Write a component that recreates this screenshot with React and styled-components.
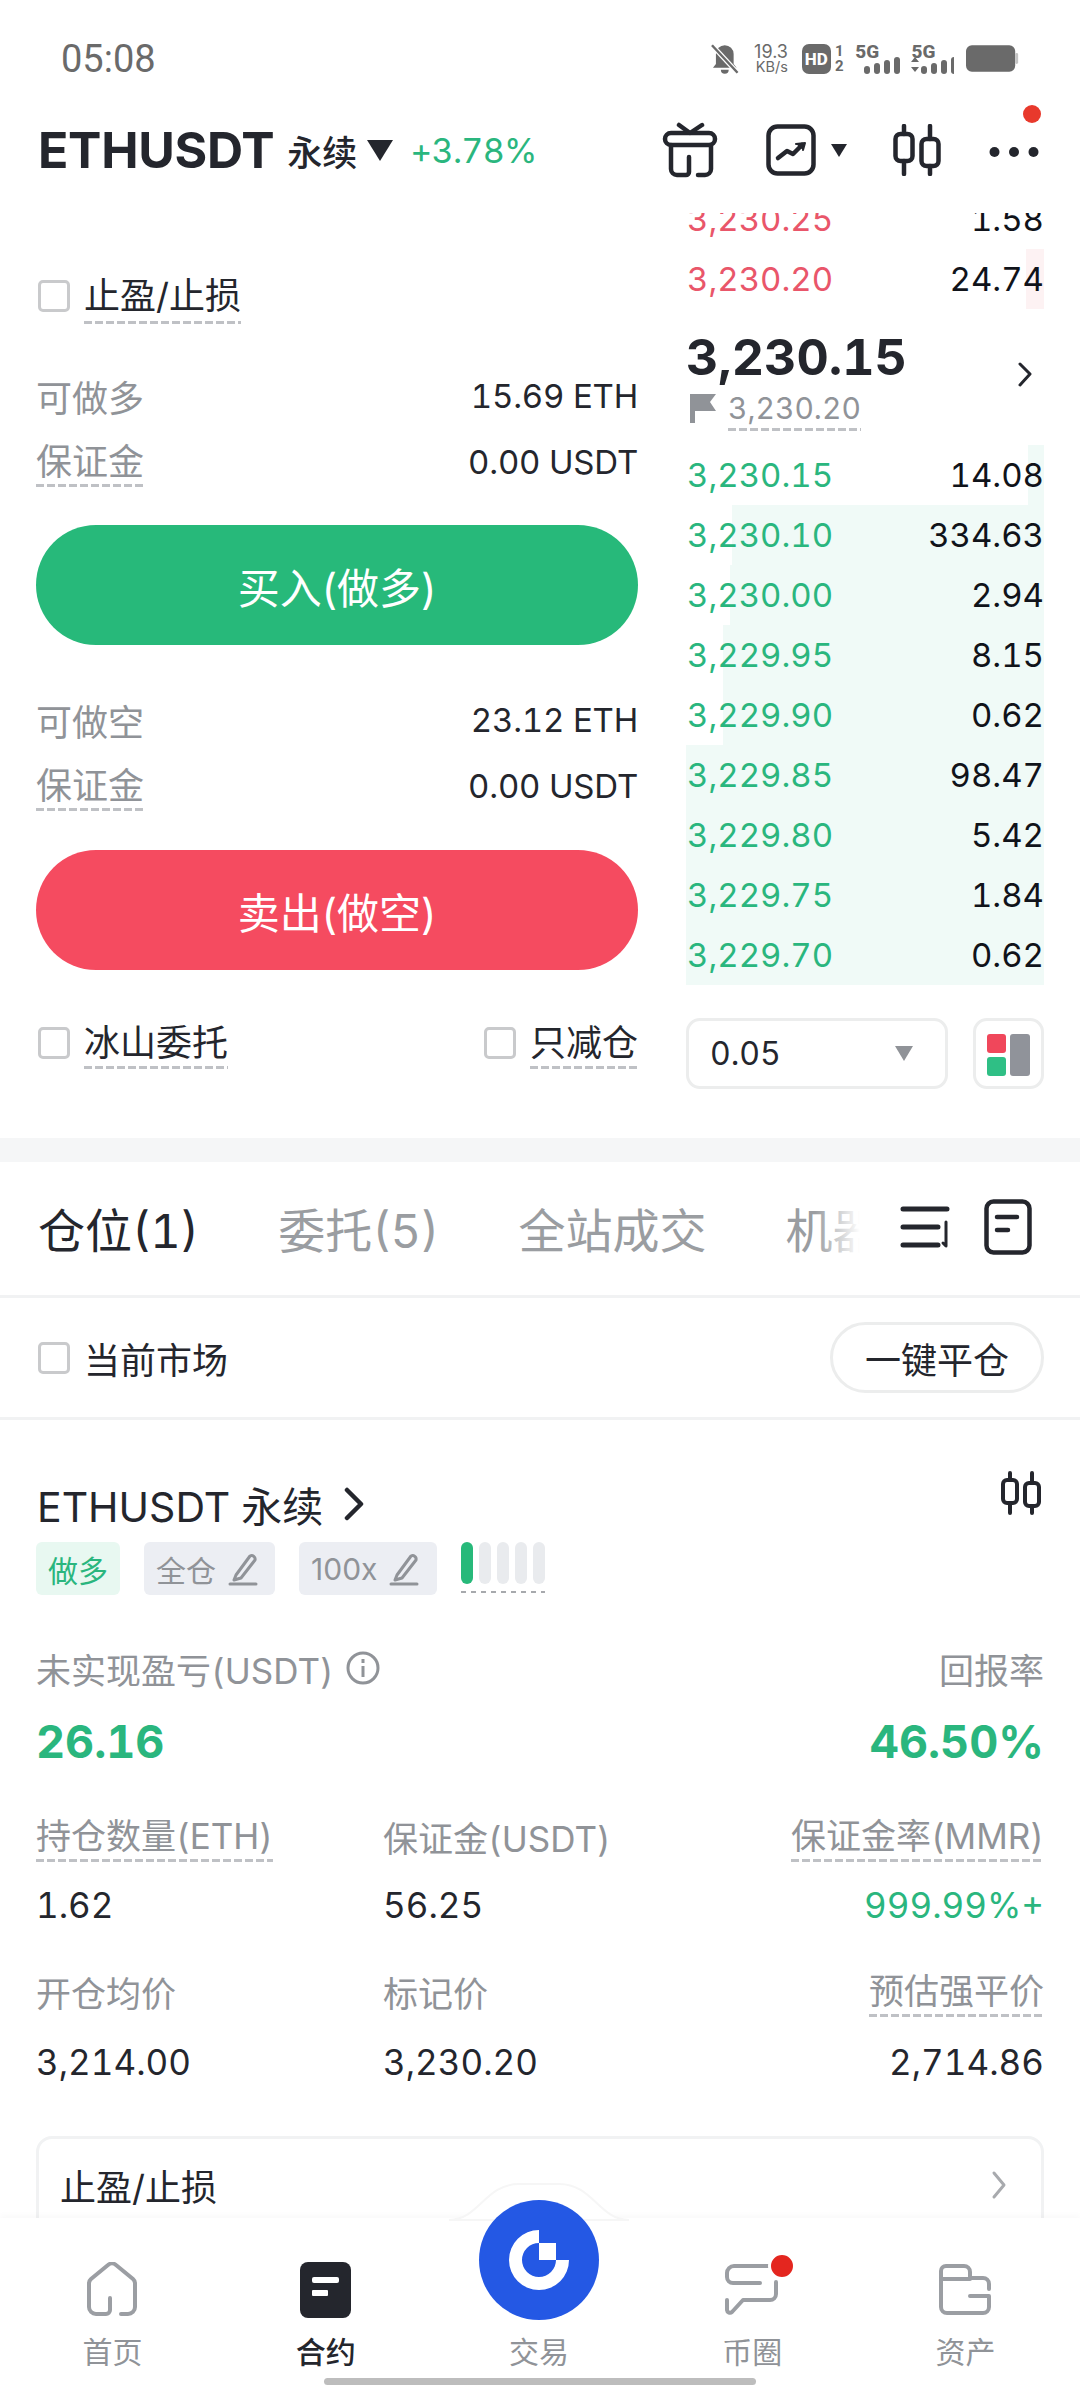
import React from 'react';
import styled, { createGlobalStyle } from 'styled-components';

const FONT = `Inter, "Noto Sans CJK SC", sans-serif`;
const DARK = '#24262d';
const GRAY = '#909398';
const GREEN = '#2ab67e';
const RED = '#e9566a';

const GlobalStyle = createGlobalStyle`
    html, body { margin: 0; padding: 0; background: #fff; }
    body { font-family: ${FONT}; color: ${DARK}; font-variant-numeric: tabular-nums; }
    * { box-sizing: border-box; }
`;

const Page = styled.div`
    position: relative;
    width: 1080px;
    height: 2388px;
    overflow: hidden;
    background: #fff;
`;

/* status bar */
const StatusBar = styled.div`
    height: 100px;
    padding: 44px 61px 0;
    display: flex;
    justify-content: space-between;
    align-items: flex-start;
    color: #6a6a6a;
`;
const Clock = styled.div`
    font: 400 38px/30px Roboto, sans-serif;
`;
const StatusIcons = styled.div`
    display: flex;
    width: 308px;
    align-items: flex-start;
`;
const Speed = styled.div`
    width: 36px;
    margin: 0 14px;
    text-align: right;
    font: 400 18px/16px Inter, sans-serif;
    small { display: block; font-size: 14.5px; line-height: 14px; }
`;
const HdBox = styled.div`
    width: 29px;
    height: 30px;
    border-radius: 7px;
    background: #6a6a6a;
    color: #fff;
    font: 800 17px/30px Roboto, sans-serif;
    text-align: center;
`;
const HdSlot = styled.div`
    width: 12px;
    margin: 0 10px 0 3px;
    font: 700 15px/15px Roboto, sans-serif;
    text-align: center;
`;
const Signal = styled.div`
    position: relative;
    width: ${(p) => p.$w}px;
    height: 30px;
    margin-right: 12px;
    font: 800 19px/16px Roboto, sans-serif;
    svg { position: absolute; right: 0; bottom: 0; }
`;

/* header */
const Header = styled.div`
    height: 113px;
    padding: 0 41px 13px 38px;
    display: flex;
    align-items: center;
`;
const Symbol = styled.div`
    font-size: 50px;
    font-weight: 700;
    letter-spacing: -0.3px;
`;
const Perp = styled.div`
    margin-left: 13px;
    font-size: 35px;
    font-weight: 500;
`;
const Caret = styled.div`
    width: 0;
    height: 0;
    margin-left: ${(p) => p.$ml || 0}px;
    border-left: ${(p) => p.$s}px solid transparent;
    border-right: ${(p) => p.$s}px solid transparent;
    border-top: ${(p) => p.$h}px solid ${(p) => p.$c || DARK};
`;
const Change = styled.div`
    margin-left: 17px;
    font-size: 34px;
    letter-spacing: -0.7px;
    color: ${GREEN};
`;
const HeaderIcons = styled.div`
    position: relative;
    margin-left: auto;
    display: flex;
    align-items: center;
    height: 56px;
`;
const RedDot = styled.span`
    position: absolute;
    right: -2px;
    top: -17px;
    width: 18px;
    height: 18px;
    border-radius: 50%;
    background: #e8392c;
`;

/* trade panel */
const Trade = styled.div`
    display: grid;
    grid-template-columns: 602px 358px;
    column-gap: 48px;
    padding: 0 36px 49px;
`;
const Form = styled.div`
    padding-top: 53px;
    display: flex;
    flex-direction: column;
`;
const CheckRow = styled.div`
    height: 60px;
    margin-top: ${(p) => p.$mt || 0}px;
    display: flex;
    align-items: center;
    justify-content: space-between;
`;
const Check = styled.label`
    display: flex;
    align-items: center;
    gap: 14px;
    padding-left: 2px;
    font-size: 36px;
`;
const Box = styled.span`
    width: 32px;
    height: 32px;
    border: 3px solid #c9cacc;
    border-radius: 5px;
`;
const Dashed = styled.span`
    position: relative;
    display: inline-block;
    line-height: 42px;
    &::after {
        content: '';
        position: absolute;
        left: 0;
        right: 0;
        bottom: ${(p) => p.$off ?? -5}px;
        height: 3px;
        background: repeating-linear-gradient(to right, #bfc1c5 0 8px, transparent 8px 11px);
    }
`;
const InfoRow = styled.div`
    height: 66px;
    margin-top: ${(p) => p.$mt || 0}px;
    display: flex;
    align-items: center;
    justify-content: space-between;
    font-size: 36px;
    color: ${GRAY};
`;
const InfoValue = styled.span`
    color: ${DARK};
    font-size: 33px;
    letter-spacing: -0.2px;
`;
const TradeButton = styled.button`
    width: 100%;
    height: 120px;
    margin-top: ${(p) => p.$mt}px;
    border: 0;
    border-radius: 60px;
    background: ${(p) => p.$bg};
    color: #fff;
    font: 400 42px ${FONT};
`;

/* order book */
const Book = styled.div`
    height: 876px;
    overflow: hidden;
    display: flex;
    flex-direction: column;
`;
const BookInner = styled.div`
    margin-top: -24px;
`;
const BookRow = styled.div`
    height: 60px;
    padding-left: 1px;
    display: flex;
    align-items: center;
    justify-content: space-between;
    font-size: 33px;
    background: linear-gradient(to left, ${(p) => p.$tint} ${(p) => p.$depth}px, transparent ${(p) => p.$depth}px);
`;
const Price = styled.span`
    color: ${(p) => p.$c};
`;
const Qty = styled.span`
    color: #10131a;
`;
const Mid = styled.div`
    position: relative;
    height: 136px;
`;
const MidPrice = styled.div`
    padding-top: 22px;
    font-size: 50px;
    font-weight: 700;
    line-height: 52px;
`;
const MarkRow = styled.div`
    margin-top: 4px;
    padding-left: 4px;
    display: flex;
    align-items: center;
    gap: 12px;
    font-size: 30px;
    color: ${GRAY};
`;
const MidArrow = styled.div`
    position: absolute;
    right: 11px;
    top: 52px;
`;
const BookControls = styled.div`
    margin-top: 33px;
    display: flex;
    justify-content: space-between;
`;
const DepthSelect = styled.div`
    width: 262px;
    height: 71px;
    padding: 0 32px 0 21px;
    border: 3px solid #eceded;
    border-radius: 14px;
    display: flex;
    align-items: center;
    justify-content: space-between;
    font-size: 32px;
`;
const LayoutButton = styled.div`
    width: 71px;
    height: 71px;
    border: 3px solid #eceded;
    border-radius: 14px;
    padding: 13px 11px;
`;

const Band = styled.div`
    height: 24px;
    background: #f5f6f7;
`;

/* tabs */
const Tabs = styled.div`
    height: 136px;
    padding: 0 48px 3px 38px;
    border-bottom: 3px solid #f1f2f3;
    display: flex;
    align-items: center;
`;
const TabScroll = styled.div`
    position: relative;
    width: 827px;
    display: flex;
    gap: 79px;
    overflow: hidden;
    white-space: nowrap;
    &::after {
        content: '';
        position: absolute;
        right: 0;
        top: 0;
        bottom: 0;
        width: 50px;
        background: linear-gradient(to right, rgba(255, 255, 255, 0), #fff 90%);
    }
`;
const Tab = styled.div`
    font-size: 47px;
    color: ${(p) => (p.$on ? DARK : '#9a9da1')};
`;
const TabIcons = styled.div`
    margin-left: auto;
    display: flex;
    align-items: center;
    gap: 34px;
`;

const Filter = styled.div`
    height: 122px;
    padding: 0 36px;
    border-bottom: 3px solid #f1f2f3;
    display: flex;
    align-items: center;
    justify-content: space-between;
`;
const CloseAll = styled.button`
    width: 214px;
    height: 71px;
    border: 3px solid #eceded;
    border-radius: 36px;
    background: #fff;
    color: ${DARK};
    font: 400 36px ${FONT};
`;

/* position */
const Position = styled.div`
    padding: 54px 36px 0;
`;
const TitleRow = styled.div`
    height: 60px;
    padding-left: 1px;
    display: flex;
    align-items: center;
    gap: 20px;
    font-size: 41px;
`;
const TitleSide = styled.div`
    margin-left: auto;
    margin-top: -12px;
    margin-right: 3px;
`;
const Tags = styled.div`
    margin-top: 8px;
    display: flex;
    gap: 24px;
    align-items: flex-start;
`;
const Tag = styled.div`
    height: 53px;
    padding: 0 ${(p) => p.$pr ?? 12}px 0 12px;
    border-radius: 6px;
    display: flex;
    align-items: center;
    gap: 12px;
    font-size: 30px;
    font-variant-numeric: normal;
    color: ${(p) => (p.$long ? GREEN : GRAY)};
    background: ${(p) => (p.$long ? '#e8f8f1' : '#eceef3')};
`;
const Risk = styled.div`
    position: relative;
    display: flex;
    gap: 6px;
    &::after {
        content: '';
        position: absolute;
        left: 0;
        right: 0;
        bottom: -9px;
        height: 2px;
        background: repeating-linear-gradient(to right, #a7a9ad 0 5px, transparent 5px 10px);
    }
`;
const RiskBar = styled.span`
    width: 12px;
    height: 42px;
    border-radius: 6px;
    background: ${(p) => (p.$on ? '#27b97a' : '#e9ebee')};
`;
const Summary = styled.div`
    height: 50px;
    margin-top: 48px;
    display: flex;
    align-items: center;
    justify-content: space-between;
    font-size: 35px;
    color: ${GRAY};
`;
const SummaryLabel = styled.div`
    display: flex;
    align-items: center;
    gap: 12px;
`;
const Pnl = styled.div`
    height: 60px;
    margin-top: 18px;
    display: flex;
    align-items: center;
    justify-content: space-between;
    font-size: 45px;
    font-weight: 700;
    color: ${GREEN};
`;
const Stats = styled.div`
    margin-top: 39px;
    display: grid;
    grid-template-columns: 347px 1fr 1fr;
    grid-template-rows: 52px 86px 86px 56px;
`;
const Stat = styled.div`
    display: flex;
    align-items: center;
    justify-content: ${(p) => (p.$right ? 'flex-end' : 'flex-start')};
    font-size: 35px;
    color: ${(p) => p.$c || (p.$value ? DARK : GRAY)};
`;
const StopCard = styled.div`
    height: 170px;
    margin-top: 46px;
    padding: 0 33px 72px 21px;
    border: 3px solid #f1f2f3;
    border-radius: 16px;
    display: flex;
    align-items: center;
    justify-content: space-between;
    font-size: 36px;
`;

/* bottom nav */
const Nav = styled.div`
    position: absolute;
    left: 0;
    right: 0;
    bottom: 0;
    height: 170px;
    padding: 44px 8px 0 6px;
    background: #fff;
    box-shadow: 0 -3px 6px rgba(0, 0, 0, 0.025);
    display: grid;
    grid-template-columns: repeat(5, 1fr);
    justify-items: center;
`;
const Bump = styled.svg`
    position: absolute;
    left: 449px;
    top: -36px;
`;
const NavItem = styled.div`
    position: relative;
    display: flex;
    flex-direction: column;
    align-items: center;
    font-size: 30px;
    font-weight: ${(p) => (p.$on ? 500 : 400)};
    color: ${(p) => (p.$on ? DARK : GRAY)};
`;
const NavIcon = styled.div`
    height: 58px;
    margin-bottom: 8px;
    display: flex;
    align-items: flex-start;
`;
const NavBall = styled.div`
    position: absolute;
    left: 50%;
    top: -62px;
    margin-left: -60px;
    width: 120px;
    height: 120px;
    border-radius: 50%;
    background: #2458e4;
    display: flex;
    align-items: center;
    justify-content: center;
`;
const Indicator = styled.div`
    position: absolute;
    left: 324px;
    bottom: 3px;
    width: 432px;
    height: 7px;
    border-radius: 4px;
    background: #bdbdbd;
`;
const RedBadge = styled.span`
    position: absolute;
    left: 46px;
    top: -10px;
    width: 28px;
    height: 28px;
    border: 3px solid #fff;
    border-radius: 50%;
    background: #e4261f;
`;

const Stroke = ({ w, h, sw = 4.5, color = DARK, ml = 0, children }) => (
    <svg
        width={w}
        height={h}
        viewBox={`0 0 ${w} ${h}`}
        fill="none"
        stroke={color}
        strokeWidth={sw}
        strokeLinecap="round"
        strokeLinejoin="round"
        style={ml ? { marginLeft: ml } : undefined}
    >
        {children}
    </svg>
);

const Pencil = () => (
    <Stroke w={30} h={34} sw={3} color={GRAY}>
        <path d="M8 23 L22 4 a3.5 3.5 0 0 1 5 4 L13 26 L6 28 Z" />
        <path d="M2 32 H28" />
    </Stroke>
);

const Bars = ({ arrows }) => (
    <svg width={arrows ? 43 : 36} height={17} viewBox={`0 0 ${arrows ? 43 : 36} 17`} fill="#6a6a6a">
        {arrows && <path d="M4 0 L8 5 H0 Z M0 10 H8 L4 15 Z" />}
        <g transform={arrows ? 'translate(10 0)' : undefined}>
            <rect x="0" y="9" width="6" height="8" rx="3" />
            <rect x="10" y="6" width="6" height="11" rx="3" />
            <rect x="20" y="3" width="6" height="14" rx="3" />
            <rect x="30" y="0" width="6" height="17" rx="3" />
        </g>
    </svg>
);

const asks = [
    ['3,230.25', '1.58', 0],
    ['3,230.20', '24.74', 18],
];
const bids = [
    ['3,230.15', '14.08', 16],
    ['3,230.10', '334.63', 312],
    ['3,230.00', '2.94', 314],
    ['3,229.95', '8.15', 321],
    ['3,229.90', '0.62', 321],
    ['3,229.85', '98.47', 358],
    ['3,229.80', '5.42', 358],
    ['3,229.75', '1.84', 358],
    ['3,229.70', '0.62', 358],
];

export default function App() {
    return (
        <Page>
            <GlobalStyle />
            <StatusBar>
                <Clock>05:08</Clock>
                <StatusIcons>
                    <svg width="28" height="30" viewBox="0 0 28 30" fill="#6a6a6a">
                        <path d="M14 1 a9 9 0 0 1 9 9 V20 l3 4 H2 l3 -4 V10 a9 9 0 0 1 9 -9 Z M10 26 h8 a4 4 0 0 1 -8 0 Z" />
                        <path d="M1 1 L27 29" stroke="#fff" strokeWidth="5" />
                        <path d="M1 1 L27 29" stroke="#6a6a6a" strokeWidth="2.5" />
                    </svg>
                    <Speed>
                        19.3
                        <small>KB/s</small>
                    </Speed>
                    <HdBox>HD</HdBox>
                    <HdSlot>
                        1
                        <br />2
                    </HdSlot>
                    <Signal $w={45}>
                        5G
                        <Bars />
                    </Signal>
                    <Signal $w={43}>
                        5G
                        <Bars arrows />
                    </Signal>
                    <svg width="54" height="28" viewBox="0 0 54 28" fill="#6a6a6a">
                        <rect x="0" y="1" width="50" height="27" rx="6" />
                        <rect x="50" y="9" width="3" height="11" rx="1.5" fill="#c4c4c4" />
                    </svg>
                </StatusIcons>
            </StatusBar>

            <Header>
                <Symbol>ETHUSDT</Symbol>
                <Perp>永续</Perp>
                <Caret $ml={10} $s={13} $h={21} />
                <Change>+3.78%</Change>
                <HeaderIcons>
                    <Stroke w={56} h={56}>
                        <rect x="3" y="11" width="50" height="12" rx="6" />
                        <path d="M17 3 L28 11 L40 3" />
                        <path d="M9 23 V47 a6 6 0 0 0 6 6 H24 a3 3 0 0 0 3 -3 V35" />
                        <path d="M49 23 V47 a6 6 0 0 1 -6 6 H36" />
                    </Stroke>
                    <Stroke w={50} h={52} ml={48}>
                        <rect x="2.5" y="2.5" width="45" height="47" rx="9" />
                        <path d="M12 34 L21 27 L27 30 L36 21" />
                        <path d="M30 20 L39 19 L37 26" fill={DARK} strokeWidth={2} />
                    </Stroke>
                    <Caret $ml={15} $s={8} $h={13} />
                    <Stroke w={48} h={52} ml={46}>
                        <rect x="2.5" y="10" width="17" height="27" rx="5" />
                        <path d="M11 2 V10 M11 37 V50" />
                        <rect x="28.5" y="15" width="17" height="27" rx="5" />
                        <path d="M37 2 V15 M37 42 V50" />
                    </Stroke>
                    <svg width="50" height="12" viewBox="0 0 50 12" fill={DARK} style={{ marginLeft: 48, marginTop: 4 }}>
                        <circle cx="5.5" cy="6" r="5" />
                        <circle cx="25" cy="6" r="5" />
                        <circle cx="44.5" cy="6" r="5" />
                    </svg>
                    <RedDot />
                </HeaderIcons>
            </Header>

            <Trade>
                <Form>
                    <CheckRow>
                        <Check>
                            <Box />
                            <Dashed $off={-7}>止盈/止损</Dashed>
                        </Check>
                    </CheckRow>
                    <InfoRow $mt={37}>
                        <span>可做多</span>
                        <InfoValue>15.69 ETH</InfoValue>
                    </InfoRow>
                    <InfoRow>
                        <Dashed $off={-4}>保证金</Dashed>
                        <InfoValue>0.00 USDT</InfoValue>
                    </InfoRow>
                    <TradeButton $mt={30} $bg="#27b97a">
                        买入(做多)
                    </TradeButton>
                    <InfoRow $mt={42}>
                        <span>可做空</span>
                        <InfoValue>23.12 ETH</InfoValue>
                    </InfoRow>
                    <InfoRow>
                        <Dashed $off={-4}>保证金</Dashed>
                        <InfoValue>0.00 USDT</InfoValue>
                    </InfoRow>
                    <TradeButton $mt={31} $bg="#f54b60">
                        卖出(做空)
                    </TradeButton>
                    <CheckRow $mt={43}>
                        <Check>
                            <Box />
                            <Dashed>冰山委托</Dashed>
                        </Check>
                        <Check>
                            <Box />
                            <Dashed>只减仓</Dashed>
                        </Check>
                    </CheckRow>
                </Form>
                <Book>
                    <BookInner>
                        {asks.map(([price, qty, depth]) => (
                            <BookRow key={price} $tint="#fdf2f3" $depth={depth}>
                                <Price $c={RED}>{price}</Price>
                                <Qty>{qty}</Qty>
                            </BookRow>
                        ))}
                        <Mid>
                            <MidPrice>3,230.15</MidPrice>
                            <MarkRow>
                                <svg width="26" height="30" viewBox="0 0 26 30" fill={GRAY}>
                                    <path d="M0 1 H26 L20 9 L26 18 H5 V30 H0 Z" />
                                </svg>
                                <Dashed $off={-2}>3,230.20</Dashed>
                            </MarkRow>
                            <MidArrow>
                                <Stroke w={16} h={26} sw={3}>
                                    <path d="M3 3 L13 13 L3 24" />
                                </Stroke>
                            </MidArrow>
                        </Mid>
                        {bids.map(([price, qty, depth]) => (
                            <BookRow key={price} $tint="#f0faf7" $depth={depth}>
                                <Price $c={GREEN}>{price}</Price>
                                <Qty>{qty}</Qty>
                            </BookRow>
                        ))}
                        <BookControls>
                            <DepthSelect>
                                0.05
                                <Caret $s={9} $h={15} $c={GRAY} />
                            </DepthSelect>
                            <LayoutButton>
                                <svg width="43" height="42" viewBox="0 0 43 42">
                                    <rect x="0" y="0" width="19" height="19" rx="3" fill="#f0475b" />
                                    <rect x="0" y="23" width="19" height="19" rx="3" fill="#2fbf85" />
                                    <rect x="23" y="0" width="20" height="42" rx="3" fill="#90939a" />
                                </svg>
                            </LayoutButton>
                        </BookControls>
                    </BookInner>
                </Book>
            </Trade>

            <Band />

            <Tabs>
                <TabScroll>
                    <Tab $on>仓位(1)</Tab>
                    <Tab>委托(5)</Tab>
                    <Tab>全站成交</Tab>
                    <Tab>机器人</Tab>
                </TabScroll>
                <TabIcons>
                    <Stroke w={50} h={44} sw={5}>
                        <path d="M3 4 H47 M3 22 H38 M3 40 H38" />
                        <path d="M46 17 V41 L43 38" strokeWidth="3" />
                    </Stroke>
                    <Stroke w={48} h={56} sw={4.5}>
                        <rect x="2.5" y="2.5" width="43" height="51" rx="7" />
                        <path d="M13 18 H33 M13 31 H24" />
                    </Stroke>
                </TabIcons>
            </Tabs>

            <Filter>
                <Check>
                    <Box />
                    当前市场
                </Check>
                <CloseAll>一键平仓</CloseAll>
            </Filter>

            <Position>
                <TitleRow>
                    ETHUSDT 永续
                    <Stroke w={22} h={34} sw={4.5}>
                        <path d="M4 3 L18 17 L4 31" />
                    </Stroke>
                    <TitleSide>
                        <Stroke w={40} h={44} sw={4}>
                            <rect x="2" y="9" width="14" height="23" rx="4" />
                            <path d="M9 2 V9 M9 32 V42" />
                            <rect x="24" y="12" width="14" height="23" rx="4" />
                            <path d="M31 2 V12 M31 35 V42" />
                        </Stroke>
                    </TitleSide>
                </TitleRow>
                <Tags>
                    <Tag $long>做多</Tag>
                    <Tag $pr={17}>
                        全仓
                        <Pencil />
                    </Tag>
                    <Tag $pr={18}>
                        100x
                        <Pencil />
                    </Tag>
                    <Risk>
                        <RiskBar $on />
                        <RiskBar />
                        <RiskBar />
                        <RiskBar />
                        <RiskBar />
                    </Risk>
                </Tags>
                <Summary>
                    <SummaryLabel>
                        未实现盈亏(USDT)
                        <svg width="34" height="34" viewBox="0 0 34 34" fill="none" stroke={GRAY} strokeWidth="3">
                            <circle cx="17" cy="17" r="15" />
                            <path d="M17 15 V26 M17 8 V12" />
                        </svg>
                    </SummaryLabel>
                    <span>回报率</span>
                </Summary>
                <Pnl>
                    <span>26.16</span>
                    <span>46.50%</span>
                </Pnl>
                <Stats>
                    <Stat>
                        <Dashed>持仓数量(ETH)</Dashed>
                    </Stat>
                    <Stat>保证金(USDT)</Stat>
                    <Stat $right>
                        <Dashed>保证金率(MMR)</Dashed>
                    </Stat>
                    <Stat $value>1.62</Stat>
                    <Stat $value>56.25</Stat>
                    <Stat $value $right $c={GREEN}>999.99%+</Stat>
                    <Stat>开仓均价</Stat>
                    <Stat>标记价</Stat>
                    <Stat $right>
                        <Dashed>预估强平价</Dashed>
                    </Stat>
                    <Stat $value>3,214.00</Stat>
                    <Stat $value>3,230.20</Stat>
                    <Stat $value $right>2,714.86</Stat>
                </Stats>
                <StopCard>
                    止盈/止损
                    <Stroke w={18} h={30} sw={3} color="#a8aaae">
                        <path d="M4 3 L14 15 L4 27" />
                    </Stroke>
                </StopCard>
            </Position>

            <Nav>
                <Bump width="180" height="40" viewBox="0 0 180 40">
                    <path d="M0 38 C30 38 36 2 70 2 H110 C144 2 150 38 180 38 Z" fill="#fff" stroke="#f6f6f6" strokeWidth="2" />
                </Bump>
                <NavItem>
                    <NavIcon>
                        <Stroke w={54} h={54} sw={4} color="#9b9ea3">
                            <path d="M24 36 V48 a4 4 0 0 1 -4 4 H10 a7 7 0 0 1 -7 -7 V21 a6 6 0 0 1 2 -4 L22 3 a6 6 0 0 1 8 0 L47 17 a6 6 0 0 1 2 4 V45 a7 7 0 0 1 -7 7 H35" />
                        </Stroke>
                    </NavIcon>
                    首页
                </NavItem>
                <NavItem $on>
                    <NavIcon>
                        <svg width="51" height="56" viewBox="0 0 51 56">
                            <rect width="51" height="56" rx="8" fill={DARK} />
                            <rect x="12" y="15" width="27" height="6" rx="2" fill="#fff" />
                            <rect x="12" y="28" width="16" height="6" rx="1" fill="#fff" />
                        </svg>
                    </NavIcon>
                    合约
                </NavItem>
                <NavItem>
                    <NavBall>
                        <svg width="60" height="60" viewBox="-30 -30 60 60">
                            <path
                                fillRule="evenodd"
                                fill="#fff"
                                d="M0 -30 A30 30 0 1 0 30 0 H17 V-17 H0 Z M0 -17 A17 17 0 1 0 17 0 H0 Z"
                            />
                        </svg>
                    </NavBall>
                    <NavIcon />
                    交易
                </NavItem>
                <NavItem>
                    <NavIcon>
                        <Stroke w={56} h={54} sw={4} color="#9b9ea3">
                            <path d="M46 4 H10 a7 7 0 0 0 -7 7 V15 a6 6 0 0 0 6 6 H36" />
                            <path d="M52 20 V32 a6 6 0 0 1 -6 6 H19 L8 50 a3 3 0 0 1 -5 -2 V38" />
                        </Stroke>
                    </NavIcon>
                    币圈
                    <RedBadge />
                </NavItem>
                <NavItem>
                    <NavIcon>
                        <Stroke w={54} h={54} sw={4} color="#9b9ea3">
                            <path d="M3 34 V9 a5 5 0 0 1 5 -5 H26 a6 6 0 0 1 6 6 V16 H45 a6 6 0 0 1 6 6 V27" />
                            <path d="M3 17 H32" />
                            <path d="M3 34 V45 a6 6 0 0 0 6 6 H45 a6 6 0 0 0 6 -6 V34 H32" />
                        </Stroke>
                    </NavIcon>
                    资产
                </NavItem>
                <Indicator />
            </Nav>
        </Page>
    );
}
